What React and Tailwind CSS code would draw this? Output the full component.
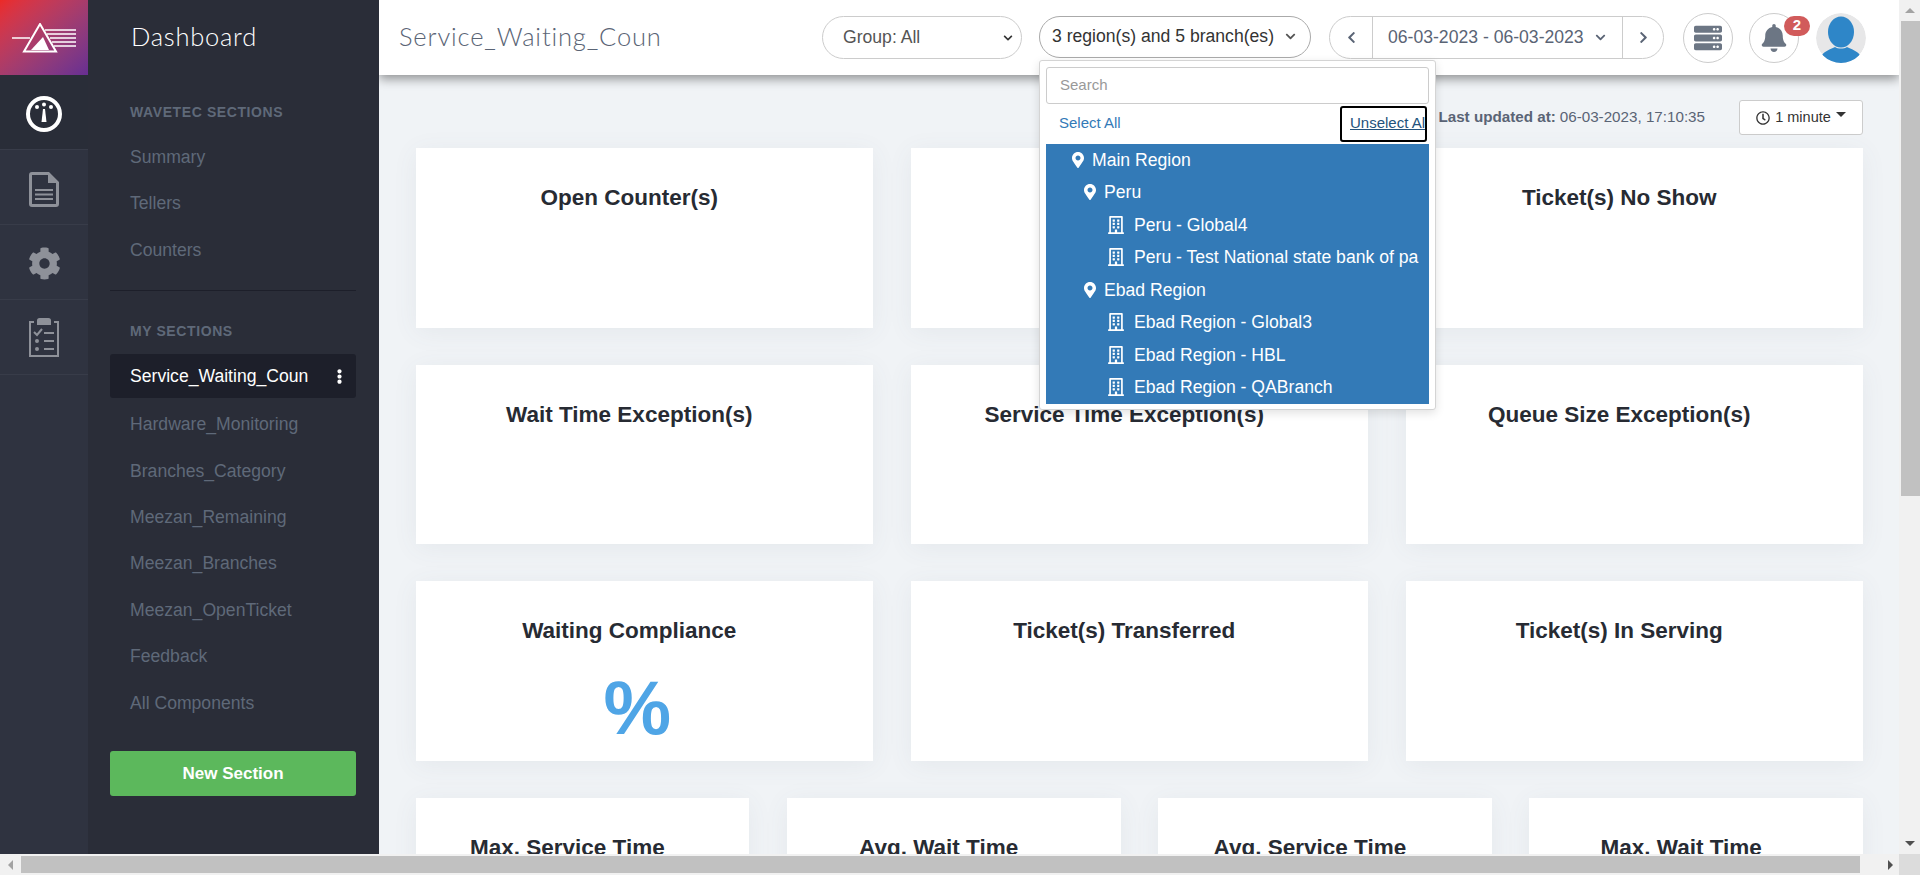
import {
  FaBell,
  FaChevronDown,
  FaChevronLeft,
  FaChevronRight,
  FaCog,
  FaEllipsisV,
  FaMapMarkerAlt,
  FaRegBuilding,
  FaRegClock,
  FaServer,
} from "react-icons/fa";

const wavetecSections = ["Summary", "Tellers", "Counters"];
const mySections = [
  "Hardware_Monitoring",
  "Branches_Category",
  "Meezan_Remaining",
  "Meezan_Branches",
  "Meezan_OpenTicket",
  "Feedback",
  "All Components",
];

const topCards = [
  { title: "Open Counter(s)" },
  { title: "Tickets Served" },
  { title: "Ticket(s) No Show" },
  { title: "Wait Time Exception(s)" },
  { title: "Service Time Exception(s)" },
  { title: "Queue Size Exception(s)" },
  { title: "Waiting Compliance", value: "%" },
  { title: "Ticket(s) Transferred" },
  { title: "Ticket(s) In Serving" },
];

const bottomCards = ["Max. Service Time", "Avg. Wait Time", "Avg. Service Time", "Max. Wait Time"];

const tree = [
  { label: "Main Region", type: "region", textClass: "pl-[46px]", iconClass: "left-[24px]" },
  { label: "Peru", type: "region", textClass: "pl-[58px]", iconClass: "left-[36px]" },
  { label: "Peru - Global4", type: "branch" },
  { label: "Peru - Test National state bank of pa", type: "branch" },
  { label: "Ebad Region", type: "region", textClass: "pl-[58px]", iconClass: "left-[36px]" },
  { label: "Ebad Region - Global3", type: "branch" },
  { label: "Ebad Region - HBL", type: "branch" },
  { label: "Ebad Region - QABranch", type: "branch" },
];

function Logo() {
  return (
    <svg width="64" height="30" viewBox="0 0 64 30" fill="none" stroke="white" strokeWidth="1.5">
      <path d="M0 15H18" />
      <path d="M28 1L12 28.500H44Z" strokeWidth="2" />
      <path d="M33 7H64M35 11H64M38 15H64M40 19H64M42 23H64" />
      <path d="M19 27L31 14L37 27Z" fill="white" stroke="none" />
    </svg>
  );
}

function GaugeIcon() {
  return (
    <svg width="36" height="36" viewBox="0 0 36 36" fill="white" className="mt-1">
      <path
        fillRule="evenodd"
        d="M18 0a18 18 0 1 0 0 36a18 18 0 0 0 0-36zm0 4a14 14 0 1 1 0 28a14 14 0 0 1 0-28z"
      />
      <circle cx="11" cy="11" r="2" />
      <circle cx="18" cy="8.500" r="2" />
      <circle cx="25" cy="11" r="2" />
      <path d="M17 13h2l1.500 13h-5z" />
    </svg>
  );
}

function DocIcon() {
  return (
    <svg width="30" height="35" viewBox="0 0 30 35" fill="#8e9199" className="mt-1">
      <path
        fillRule="evenodd"
        d="M3 0h17l10 10v22a3 3 0 0 1-3 3H3a3 3 0 0 1-3-3V3a3 3 0 0 1 3-3zm16 3H3v29h24V11h-8z"
      />
      <path d="M6 17h18v2H6zM6 21.500h18v2H6zM6 26h18v2H6z" />
    </svg>
  );
}

function ChecklistIcon() {
  return (
    <svg width="30" height="39" viewBox="0 0 30 39" fill="none" stroke="#8e9199" strokeWidth="2">
      <path d="M5 4H1v34h28V4h-4" />
      <path d="M9 2.500c0-1 1-1.500 1.500-1.500h9c.5 0 1.500.5 1.500 1.500V6H9z" fill="#8e9199" />
      <path d="M5 14l3 3l5-6" />
      <path d="M15 15h10M15 23h10M15 31h10" />
      <circle cx="8" cy="23" r="1" fill="#8e9199" />
      <circle cx="8" cy="31" r="1" fill="#8e9199" />
    </svg>
  );
}

function Avatar() {
  return (
    <svg width="50" height="50" viewBox="0 0 50 50" className="rounded-full">
      <circle cx="25" cy="25" r="25" fill="#e7e7e8" />
      <ellipse cx="25" cy="19" rx="13" ry="15.500" fill="#2e86c8" />
      <path d="M6 42c3-4 9-6 13-8c3 2 9 2 12 0c4 2 10 4 13 8a25 25 0 0 1-38 0z" fill="#2e86c8" />
    </svg>
  );
}

function RailCell({ active, children }) {
  return (
    <div
      className={`flex h-[75px] items-center justify-center border-b border-[#383c49] ${
        active ? "bg-[#292d38]" : ""
      }`}
    >
      {children}
    </div>
  );
}

function SideLink({ children }) {
  return (
    <div className="flex h-[46.400px] items-center pl-5 text-[17.600px] text-[#5f6979]">{children}</div>
  );
}

function SideHeading({ children }) {
  return (
    <div className="flex h-[22px] items-center pl-5 text-sm font-bold tracking-[0.6px] text-[#5f6979]">
      {children}
    </div>
  );
}

function StatCard({ title, value, tall }) {
  return (
    <div
      className={`bg-white pt-[36px] pr-[30px] text-center text-[#272b33] shadow-[0_4px_24px_rgba(80,100,120,0.07)] ${
        tall ? "h-[179.500px]" : "h-[200px]"
      }`}
    >
      <div className="text-[22.500px] leading-7 font-bold">{title}</div>
      {value && <div className="mt-[17px] pl-[16px] text-[76px] leading-[92px] font-bold text-[#4fa5e6]">{value}</div>}
    </div>
  );
}

function RegionDropdown() {
  return (
    <div className="absolute top-[43px] -left-px z-30 h-[350px] w-[397px] rounded-[3px] border border-[#d4d4d4] bg-white px-[6px] pt-[6px] text-[#333] shadow-[0_3px_10px_rgba(0,0,0,0.12)]">
      <div className="flex h-[37px] items-center rounded-[3px] border border-[#ccc] pl-[13px] text-[15px] text-[#999]">
        Search
      </div>
      <div className="flex h-10 items-center justify-between pl-[13px]">
        <span className="text-[15px] text-[#337ab7]">Select All</span>
        <span className="mr-[2px] flex h-9 w-[87px] items-center overflow-hidden rounded-[3px] border-2 border-black pl-2 text-[15px] whitespace-nowrap text-[#23527c] underline">
          Unselect All
        </span>
      </div>
      <div className="bg-[#337ab7] text-[17.600px] text-white">
        {tree.map((row) => (
          <div key={row.label} className="relative flex h-[32.500px] items-center whitespace-nowrap">
            {row.type === "region" ? (
              <>
                <FaMapMarkerAlt className={`absolute text-[16px] ${row.iconClass}`} />
                <span className={row.textClass}>{row.label}</span>
              </>
            ) : (
              <>
                <FaRegBuilding className="absolute left-[61px] text-[18px]" />
                <span className="pl-[88px]">{row.label}</span>
              </>
            )}
          </div>
        ))}
      </div>
    </div>
  );
}

function Header() {
  return (
    <header className="relative z-20 flex h-[75px] shrink-0 items-center bg-white pl-5 shadow-[0_4px_10px_rgba(0,0,0,0.4)]">
      <div className="mb-[2px] w-[423px] font-['Lato',sans-serif] text-[25.500px] font-light tracking-[0.85px] text-[#5a6475]">
        Service_Waiting_Coun
      </div>

      <div className="flex h-[43px] w-[200px] items-center justify-between rounded-full border border-[#ccc] pr-2 pl-[20px] text-[17.600px] text-[#555]">
        Group: All
        <FaChevronDown className="text-[10px] text-[#333]" />
      </div>

      <div className="relative mb-[2px] ml-[17px] flex h-[42px] w-[272px] items-center justify-between rounded-full border border-[#aaa] pr-[14px] pl-3 text-[17.600px] whitespace-nowrap text-[#333]">
        3 region(s) and 5 branch(es)
        <FaChevronDown className="text-[11px] text-[#555]" />
        <RegionDropdown />
      </div>

      <div className="ml-[18px] flex h-[43px] w-[335px] items-center rounded-full border border-[#ccc] text-[17.600px] text-[#5a6475]">
        <div className="flex h-full w-[43px] items-center justify-center border-r border-[#ccc]">
          <FaChevronLeft className="text-[13px]" />
        </div>
        <div className="flex h-full w-[250px] items-center border-r border-[#ccc] pl-[15px] whitespace-nowrap">
          06-03-2023 - 06-03-2023
          <FaChevronDown className="ml-[11px] text-[11px]" />
        </div>
        <div className="flex h-full flex-1 items-center justify-center">
          <FaChevronRight className="text-[13px]" />
        </div>
      </div>

      <div className="ml-[19px] flex h-[50px] w-[50px] items-center justify-center rounded-full border border-[#ccc]">
        <FaServer className="text-[28px] text-[#6c7684]" />
      </div>

      <div className="relative ml-[16px] flex h-[50px] w-[50px] items-center justify-center rounded-full border border-[#ccc]">
        <FaBell className="text-[28px] text-[#6c7684]" />
        <span className="absolute top-[2px] -right-[12px] flex h-5 w-[26px] items-center justify-center rounded-full bg-[#d15b5b] text-[15px] font-bold text-white">
          2
        </span>
      </div>

      <div className="ml-[17px]">
        <Avatar />
      </div>
    </header>
  );
}

function VerticalScrollbar() {
  return (
    <div className="flex w-[21px] shrink-0 flex-col bg-[#f1f1f1]">
      <div className="flex h-[21px] items-center justify-center">
        <div className="h-0 w-0 border-x-[5px] border-b-[5px] border-x-transparent border-b-[#a3a3a3]" />
      </div>
      <div className="ml-[2px] h-[475px] w-[19px] bg-[#c1c1c1]" />
      <div className="flex-1" />
      <div className="flex h-[21px] items-center justify-center">
        <div className="h-0 w-0 border-x-[5px] border-t-[5px] border-x-transparent border-t-[#505050]" />
      </div>
    </div>
  );
}

function HorizontalScrollbar() {
  return (
    <div className="flex h-[21px] shrink-0 bg-[#f1f1f1]">
      <div className="flex w-[21px] items-center justify-center">
        <div className="h-0 w-0 border-y-[5px] border-r-[5px] border-y-transparent border-r-[#a3a3a3]" />
      </div>
      <div className="mt-[2px] h-[17px] w-[1839px] bg-[#c1c1c1]" />
      <div className="flex flex-1 items-center justify-end pr-[6px]">
        <div className="h-0 w-0 border-y-[5px] border-l-[5px] border-y-transparent border-l-[#505050]" />
      </div>
      <div className="w-[21px] bg-[#dcdcdc]" />
    </div>
  );
}

export default function App() {
  return (
    <div className="flex h-[875px] w-[1920px] flex-col overflow-hidden font-['Liberation_Sans',Arial,sans-serif]">
      <div className="flex min-h-0 flex-1">
        {/* icon rail */}
        <aside className="w-[88px] shrink-0 bg-[#2f3340]">
          <div className="flex h-[75px] items-center justify-center bg-gradient-to-br from-[#ec2a26] to-[#672e93]">
            <Logo />
          </div>
          <RailCell active>
            <GaugeIcon />
          </RailCell>
          <RailCell>
            <DocIcon />
          </RailCell>
          <RailCell>
            <FaCog className="mt-[2px] text-[33px] text-[#8e9199]" />
          </RailCell>
          <RailCell>
            <ChecklistIcon />
          </RailCell>
        </aside>

        {/* sections sidebar */}
        <aside className="w-[291px] shrink-0 bg-[#2a2d38] pr-[23px] pl-[22px]">
          <div className="flex h-[75px] items-center pb-[2px] pl-[21px] font-['Lato',sans-serif] text-[25.500px] font-light tracking-[0.75px] text-white">
            Dashboard
          </div>
          <div className="mt-[26px] mb-[11px]">
            <SideHeading>WAVETEC SECTIONS</SideHeading>
          </div>
          {wavetecSections.map((name) => (
            <SideLink key={name}>{name}</SideLink>
          ))}
          <div className="mt-[17px] border-t border-[#1d1f2a]" />
          <div className="mt-[29px] mb-[12px]">
            <SideHeading>MY SECTIONS</SideHeading>
          </div>
          <div className="mb-[3px] flex h-11 items-center justify-between rounded-[3px] bg-[#1d1f2a] pt-px pr-[9px] pl-5 text-[17.600px] text-white">
            Service_Waiting_Coun
            <FaEllipsisV className="text-[15px]" />
          </div>
          {mySections.map((name) => (
            <SideLink key={name}>{name}</SideLink>
          ))}
          <div className="mt-[25px] flex h-[45px] items-center justify-center rounded-[3px] bg-[#5cb85c] text-[17px] font-bold text-white">
            New Section
          </div>
        </aside>

        {/* main column */}
        <main className="flex min-w-0 flex-1 flex-col overflow-hidden bg-[#f0f3f6]">
          <Header />
          <div className="pt-[25px] pr-9 pl-[36.500px]">
            <div className="flex h-[35px] items-center justify-end text-[15.200px] text-[#5a6475]">
              <span className="font-bold">Last updated at:</span>
              <span className="ml-1">06-03-2023, 17:10:35</span>
              <div className="ml-[34px] flex h-[35px] w-[124px] items-center justify-center rounded-[3px] border border-[#ccc] bg-white text-[14.500px] text-[#333]">
                <FaRegClock className="mr-[5px] text-[14px]" />
                1 minute
                <div className="mb-[6px] ml-[5px] h-0 w-0 border-x-[5px] border-t-[5px] border-x-transparent border-t-[#333]" />
              </div>
            </div>
            <div className="mt-[13px] grid grid-cols-3 gap-x-[37.500px] gap-y-[37px]">
              {topCards.map((card) => (
                <StatCard key={card.title} title={card.title} value={card.value} tall />
              ))}
            </div>
            <div className="mt-[37px] grid grid-cols-4 gap-x-[37.500px]">
              {bottomCards.map((title) => (
                <StatCard key={title} title={title} />
              ))}
            </div>
          </div>
        </main>

        <VerticalScrollbar />
      </div>
      <HorizontalScrollbar />
    </div>
  );
}
